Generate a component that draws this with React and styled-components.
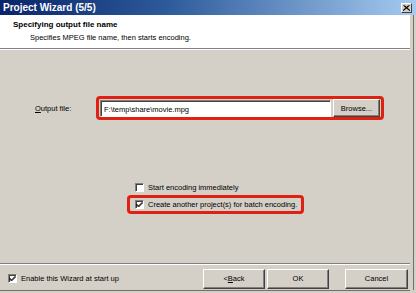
import React from 'react';
import styled, { createGlobalStyle } from 'styled-components';

const Global = createGlobalStyle`
  html, body { margin: 0; padding: 0; background: #d4d0c8; }
  body { font-family: "Liberation Sans", Arial, sans-serif; font-size: 7.5px; color: #000; }
`;

const Window = styled.div`
  width: 416px;
  height: 293px;
  display: flex;
  flex-direction: column;
  background: #d4d0c8;
`;

const TitleBar = styled.div`
  height: 15px;
  flex: none;
  display: flex;
  align-items: center;
  justify-content: space-between;
  padding: 0 4px 0 3px;
  background: linear-gradient(to right, #0a246a 0%, #2d5a9a 40%, #a6caf0 100%);
  color: #fff;
  font-weight: bold;
  font-size: 10px;
`;

const CloseButton = styled.div`
  width: 11px;
  height: 10px;
  box-sizing: border-box;
  background: #d4d0c8;
  border: 1px solid;
  border-color: #fff #404040 #404040 #fff;
  display: flex;
  align-items: center;
  justify-content: center;
`;

const Frame = styled.div`
  flex: 1;
  display: flex;
  flex-direction: column;
  margin-right: 6px;
  margin-bottom: 3px;
  box-shadow: 3px 0 0 #d4d0c8, 4px 0 0 #707070, 0 1px 0 #707070;
`;

const Header = styled.div`
  height: 34px;
  flex: none;
  background: #fff;
  border-bottom: 1px solid #808080;
  padding: 5px 0 0 13px;
  box-sizing: border-box;
`;

const HeaderTitle = styled.div`
  font-weight: bold;
  font-size: 8px;
  line-height: 10px;
`;

const HeaderSub = styled.div`
  padding-left: 17px;
  margin-top: 3px;
  line-height: 10px;
`;

const Body = styled.div`
  flex: 1;
  display: flex;
  flex-direction: column;
  padding-top: 46px;
  border-top: 1px solid #fff;
`;

const FileRow = styled.div`
  display: flex;
  align-items: center;
  padding-left: 35px;
`;

const Label = styled.span`
  width: 61px;
  flex: none;
  u { text-decoration: underline; }
`;

const Highlight = styled.div`
  display: flex;
  align-items: center;
  gap: ${p => p.$gap || 0}px;
  border: 3px solid #e02010;
  border-radius: 4px;
  padding: ${p => p.$pad || '0 1px'};
`;

const TextField = styled.div`
  width: 231px;
  height: 17px;
  box-sizing: border-box;
  background: #fff;
  border: 1px solid;
  border-color: #808080 #fff #fff #808080;
  box-shadow: inset 1px 1px 0 #404040;
  padding: 3px 3px 0;
  line-height: 11px;
  white-space: nowrap;
`;

const Button = styled.div`
  width: ${p => p.$w || 62}px;
  height: ${p => p.$h || 20}px;
  box-sizing: border-box;
  background: #d4d0c8;
  border: 1px solid;
  border-color: #fff #404040 #404040 #fff;
  box-shadow: inset -1px -1px 0 #808080;
  display: flex;
  align-items: center;
  justify-content: center;
  u { text-decoration: underline; }
`;

const Options = styled.div`
  display: flex;
  flex-direction: column;
  align-items: flex-start;
  padding-left: 127px;
  margin-top: 63px;
  gap: 3px;
`;

const CheckRow = styled.div`
  display: flex;
  align-items: center;
  gap: 4px;
  padding-left: ${p => p.$indent || 0}px;
`;

const Box = styled.span`
  width: 9px;
  height: 9px;
  box-sizing: border-box;
  background: #fff;
  border: 1px solid;
  border-color: #808080 #fff #fff #808080;
  box-shadow: inset 1px 1px 0 #404040;
  display: flex;
  align-items: center;
  justify-content: center;
`;

const Footer = styled.div`
  flex: none;
  border-top: 1px solid #808080;
  box-shadow: inset 0 1px 0 #fff;
  height: 27px;
  box-sizing: border-box;
  display: flex;
  align-items: center;
  padding: 3px 2px 0 8px;
`;

const Spacer = styled.div`
  flex: 1;
`;

const ButtonGroup = styled.div`
  display: flex;
  gap: ${p => p.$gap}px;
`;

const Check = () => (
  <svg width="7" height="7" viewBox="0 0 7 7">
    <path d="M0.5 3 L2.5 5 L6.5 1 M0.5 4 L2.5 6 L6.5 2" stroke="#000" strokeWidth="1" fill="none" />
  </svg>
);

const Cross = () => (
  <svg width="7" height="6" viewBox="0 0 7 6">
    <path d="M0.5 0.5 L6.5 5.5 M6.5 0.5 L0.5 5.5 M1.5 0.5 L7 5.5 M5.5 0.5 L0 5.5" stroke="#000" strokeWidth="1" fill="none" />
  </svg>
);

function CheckBox({ checked, children, indent }) {
  return (
    <CheckRow $indent={indent}>
      <Box>{checked && <Check />}</Box>
      <span>{children}</span>
    </CheckRow>
  );
}

export default function App() {
  return (
    <>
      <Global />
      <Window>
        <TitleBar>
          <span>Project Wizard (5/5)</span>
          <CloseButton><Cross /></CloseButton>
        </TitleBar>
        <Frame>
          <Header>
            <HeaderTitle>Specifying output file name</HeaderTitle>
            <HeaderSub>Specifies MPEG file name, then starts encoding.</HeaderSub>
          </Header>
          <Body>
            <FileRow>
              <Label><u>O</u>utput file:</Label>
              <Highlight $gap={2}>
                <TextField>F:\temp\share\movie.mpg</TextField>
                <Button $w={47} $h={18}>Browse...</Button>
              </Highlight>
            </FileRow>
            <Options>
              <CheckBox indent={8}>Start encoding immediately</CheckBox>
              <Highlight $pad="2px 4px 2px 5px">
                <CheckBox checked>Create another project(s) for batch encoding.</CheckBox>
              </Highlight>
            </Options>
          </Body>
          <Footer>
            <CheckBox checked>Enable this Wizard at start up</CheckBox>
            <Spacer />
            <ButtonGroup $gap={16}>
              <ButtonGroup $gap={2}>
                <Button>&lt; <u>B</u>ack</Button>
                <Button>OK</Button>
              </ButtonGroup>
              <Button $w={63}>Cancel</Button>
            </ButtonGroup>
          </Footer>
        </Frame>
      </Window>
    </>
  );
}
